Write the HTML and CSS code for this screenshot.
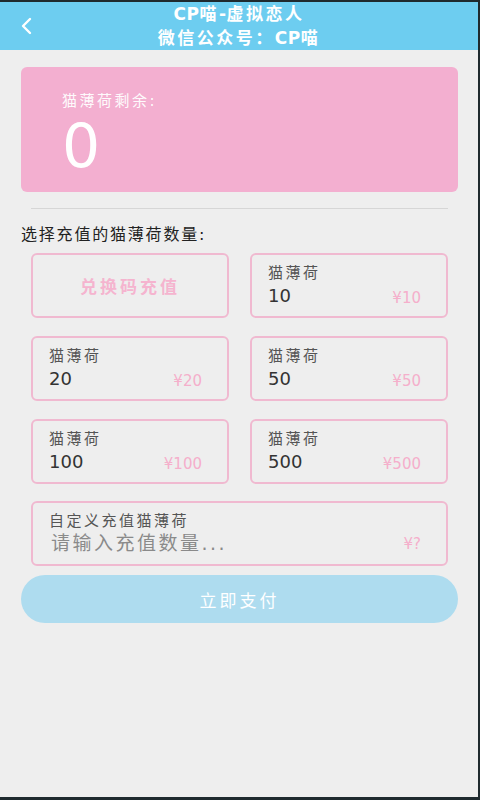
FILE: index.html
```html
<!DOCTYPE html>
<html lang="zh-CN">

<head>
    <meta charset="UTF-8">
    <meta name="viewport" content="width=device-width, initial-scale=1.0">
    <title>CP喵-充值</title>
    <link rel="stylesheet" href="styles.css">
</head>

<body>
    <div class="screen">
        <div class="header">
            <a href="#" class="back">
                <svg width="14" height="20" viewBox="0 0 14 20" fill="none" stroke="currentColor" stroke-width="2.4"
                    stroke-linecap="round" stroke-linejoin="round">
                    <path d="M11 3L4 10l7 7" />
                </svg>
            </a>
            <div class="title"><span class="latin">CP</span>喵<span class="latin">-</span>虚拟恋人</div>
            <div class="title">微信公众号：<span class="latin">CP</span>喵</div>
        </div>

        <div class="content">
            <div class="balance-card">
                <div class="balance-label">猫薄荷剩余:</div>
                <div class="balance-value">0</div>
            </div>

            <div class="separator"></div>

            <div class="section-title">选择充值的猫薄荷数量:</div>

            <div class="options">
                <div class="option code">兑换码充值</div>
                <div class="option">
                    <div class="option-name">猫薄荷</div>
                    <div class="option-row">
                        <span class="amount">10</span>
                        <span class="price">¥10</span>
                    </div>
                </div>
                <div class="option">
                    <div class="option-name">猫薄荷</div>
                    <div class="option-row">
                        <span class="amount">20</span>
                        <span class="price">¥20</span>
                    </div>
                </div>
                <div class="option">
                    <div class="option-name">猫薄荷</div>
                    <div class="option-row">
                        <span class="amount">50</span>
                        <span class="price">¥50</span>
                    </div>
                </div>
                <div class="option">
                    <div class="option-name">猫薄荷</div>
                    <div class="option-row">
                        <span class="amount">100</span>
                        <span class="price">¥100</span>
                    </div>
                </div>
                <div class="option">
                    <div class="option-name">猫薄荷</div>
                    <div class="option-row">
                        <span class="amount">500</span>
                        <span class="price">¥500</span>
                    </div>
                </div>
                <div class="option custom">
                    <div class="option-name">自定义充值猫薄荷</div>
                    <div class="option-row">
                        <input type="text" class="custom-input" placeholder="请输入充值数量...">
                        <span class="price">¥?</span>
                    </div>
                </div>
            </div>

            <button class="pay-button">立即支付</button>
        </div>
    </div>
</body>

</html>
```

FILE: styles.css
```css
* {
    margin: 0;
    padding: 0;
    box-sizing: border-box;
    font-family: 'DejaVu Sans', 'Noto Sans CJK SC', sans-serif;
}

html {
    background-color: #1f2a2e;
}

body {
    width: 480px;
    height: 800px;
    padding: 2px 2px 3px 0;
}

.screen {
    height: 100%;
    background-color: #eeeeee;
    display: flex;
    flex-direction: column;
}

.header {
    background-color: #6dcdf0;
    height: 48px;
    position: relative;
    display: flex;
    flex-direction: column;
    align-items: center;
    justify-content: center;
    color: white;
}

.title {
    font-size: 17px;
    font-weight: bold;
    letter-spacing: 2.5px;
    line-height: 24px;
}

.title .latin {
    letter-spacing: 0.5px;
}

.back {
    position: absolute;
    left: 19px;
    top: 14px;
    color: white;
}

.content {
    padding: 17px 20px 0 21px;
}

.balance-card {
    background-color: #f3afd0;
    border-radius: 6px;
    height: 125px;
    padding: 23px 41px;
    color: white;
}

.balance-label {
    font-size: 15px;
    letter-spacing: 2.5px;
    line-height: 22px;
    opacity: 0.95;
}

.balance-value {
    font-size: 60px;
    line-height: 64px;
    padding-top: 2px;
}

.separator {
    height: 1px;
    background-color: #d6d6d6;
    margin: 16px 10px 0;
}

.section-title {
    font-size: 16px;
    letter-spacing: 1.8px;
    color: #222;
    margin-top: 15px;
    line-height: 22px;
}

.options {
    display: grid;
    grid-template-columns: 1fr 1fr;
    column-gap: 21px;
    row-gap: 18px;
    margin: 7px 10px 0;
}

.option {
    height: 65px;
    border: 2px solid #f0b9d0;
    border-radius: 6px;
    padding: 7px 25px 0 16px;
}

.option.code {
    display: flex;
    align-items: center;
    justify-content: center;
    padding: 0;
    color: #f5b4cf;
    font-size: 17px;
    letter-spacing: 3px;
    font-weight: bold;
}

.option.custom {
    grid-column: span 2;
    margin-top: -1px;
}

.option-name {
    font-size: 15px;
    letter-spacing: 2.5px;
    color: #555;
    line-height: 22px;
}

.option-row {
    display: flex;
    justify-content: space-between;
    align-items: flex-end;
}

.amount {
    font-size: 18px;
    color: #333;
    line-height: 24px;
}

.price {
    font-size: 15px;
    color: #f5afcb;
    line-height: 20px;
}

.custom-input {
    border: none;
    background: none;
    font-size: 19px;
    letter-spacing: 2.5px;
    color: #888;
    width: 280px;
    outline: none;
    padding-left: 2px;
}

.custom-input::placeholder {
    color: #8a8a8a;
}

.pay-button {
    display: block;
    width: 100%;
    height: 48px;
    margin-top: 9px;
    border: none;
    border-radius: 24px;
    background-color: #aedcef;
    color: white;
    font-size: 17px;
    letter-spacing: 3px;
}
```
